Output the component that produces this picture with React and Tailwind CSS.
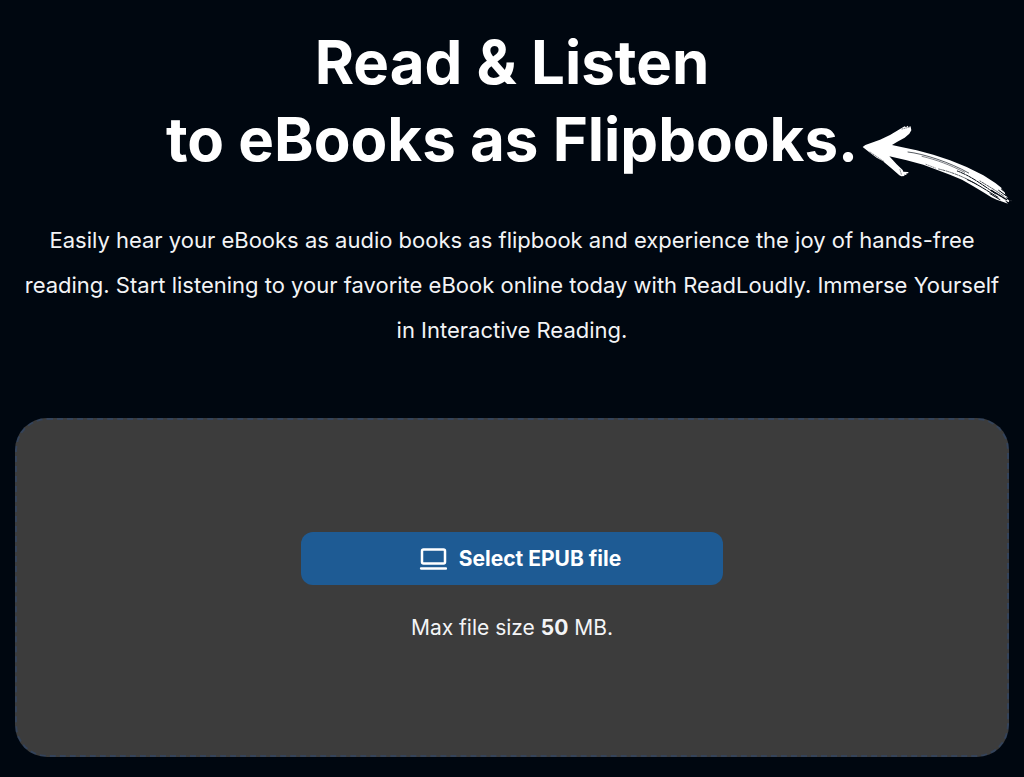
import { useState } from 'react'

function ArrowDoodle({ className }) {
  return (
    <svg viewBox="36 44 450 240" className={className} aria-hidden="true">
      <path
        fill="#fff"
        d="M38 110 L46 104 L90 88 L120 74 L150 56 L164 48 L168 51 L173 46 L175 50 L182 48 L184 60 L178 70 L164 82 L142 94 L126 104 L150 109 L200 120 L250 133 L300 150 L350 170 L400 195 L436 218 L454 232 L458 240 L464 244 L466 254 L474 262 L466 261 L478 271 L476 276 L464 270 L474 280 L460 275 L440 268 L424 261 L400 246 L370 228 L336 208 L300 193 L262 179 L220 163 L170 150 L118 138 L140 162 L158 179 L160 184 L174 185 L176 188 L168 190 L170 194 L162 193 L164 197 L154 198 L148 195 L124 174 L98 152 L80 142 L58 126 Z"
      />
      <g fill="none" stroke="#000710" strokeLinecap="round">
        <path strokeWidth="2" d="M174 125 C220 130 300 156 356 188" />
        <path strokeWidth="1.5" d="M216 138 C262 149 300 164 344 186" />
        <path strokeWidth="3" strokeDasharray="9 3 14 4 5 3" d="M322 182 C360 196 396 222 436 250" />
        <path strokeWidth="2" strokeDasharray="5 4 2 3" d="M266 176 C310 186 350 204 380 222" />
        <path strokeWidth="3" strokeDasharray="24 3 12 2" d="M352 208 C384 222 412 242 446 262" />
        <path strokeWidth="2" strokeDasharray="3 4 7 3" d="M390 212 C416 228 440 242 462 258" />
        <path strokeWidth="4" strokeDasharray="10 3" d="M424 240 L470 268" />
        <path strokeWidth="3" d="M446 240 L468 256 M454 236 L466 246 M420 250 L450 268" />
        <path strokeWidth="1.5" strokeDasharray="2 4" d="M60 125 L104 155 M156 56 L180 50 M150 178 L154 192 M228 162 L256 173" />
      </g>
      <path fill="#fff" d="M482 270 l2 1 l-1 2 z" />
    </svg>
  )
}

function LaptopIcon({ className }) {
  return (
    <svg viewBox="0 0 28 24" className={className} fill="none" stroke="currentColor" aria-hidden="true">
      <rect x="3" y="2.5" width="23" height="14" rx="1.5" strokeWidth="2.5" />
      <path d="M2 21.5h25" strokeWidth="2.3" strokeLinecap="round" />
    </svg>
  )
}

export default function App() {
  const [fileName, setFileName] = useState('')

  const selectFile = () => {
    const input = document.createElement('input')
    input.type = 'file'
    input.accept = '.epub'
    input.onchange = () => setFileName(input.files[0]?.name || '')
    input.click()
  }

  return (
    <main className="min-h-screen bg-[#000710] px-[15px] pt-6 pb-5 text-center font-['Inter',sans-serif] text-white">
      <h1 className="text-6xl leading-[77px] font-bold">
        Read &amp; Listen
        <br />
        <span className="relative inline-block">
          to eBooks as Flipbooks.
          <ArrowDoodle className="absolute top-6 left-full ml-1 h-20 w-[150px]" />
        </span>
      </h1>

      <p className="mt-10 text-[22px] leading-[45px] text-gray-100">
        Easily hear your eBooks as audio books as flipbook and experience the joy of hands-free
        reading. Start listening to your favorite eBook online today with ReadLoudly. Immerse Yourself
        in Interactive Reading.
      </p>

      <section className="mt-[65px] flex min-h-[339px] flex-col items-center justify-center rounded-4xl border-2 border-dashed border-[#34435a] bg-[#3c3c3c] px-4">
        <button
          type="button"
          onClick={selectFile}
          className="flex h-[53px] w-full max-w-[422px] items-center justify-center gap-3 rounded-xl bg-[#1e5b94] pl-4 text-[21px] font-bold text-white hover:bg-[#2467a6]"
        >
          <LaptopIcon className="h-6 w-7" />
          {fileName || 'Select EPUB file'}
        </button>
        <p className="mt-7 text-[21px] leading-[30px] text-gray-100">
          Max file size <strong className="font-bold">50</strong> MB.
        </p>
      </section>
    </main>
  )
}
